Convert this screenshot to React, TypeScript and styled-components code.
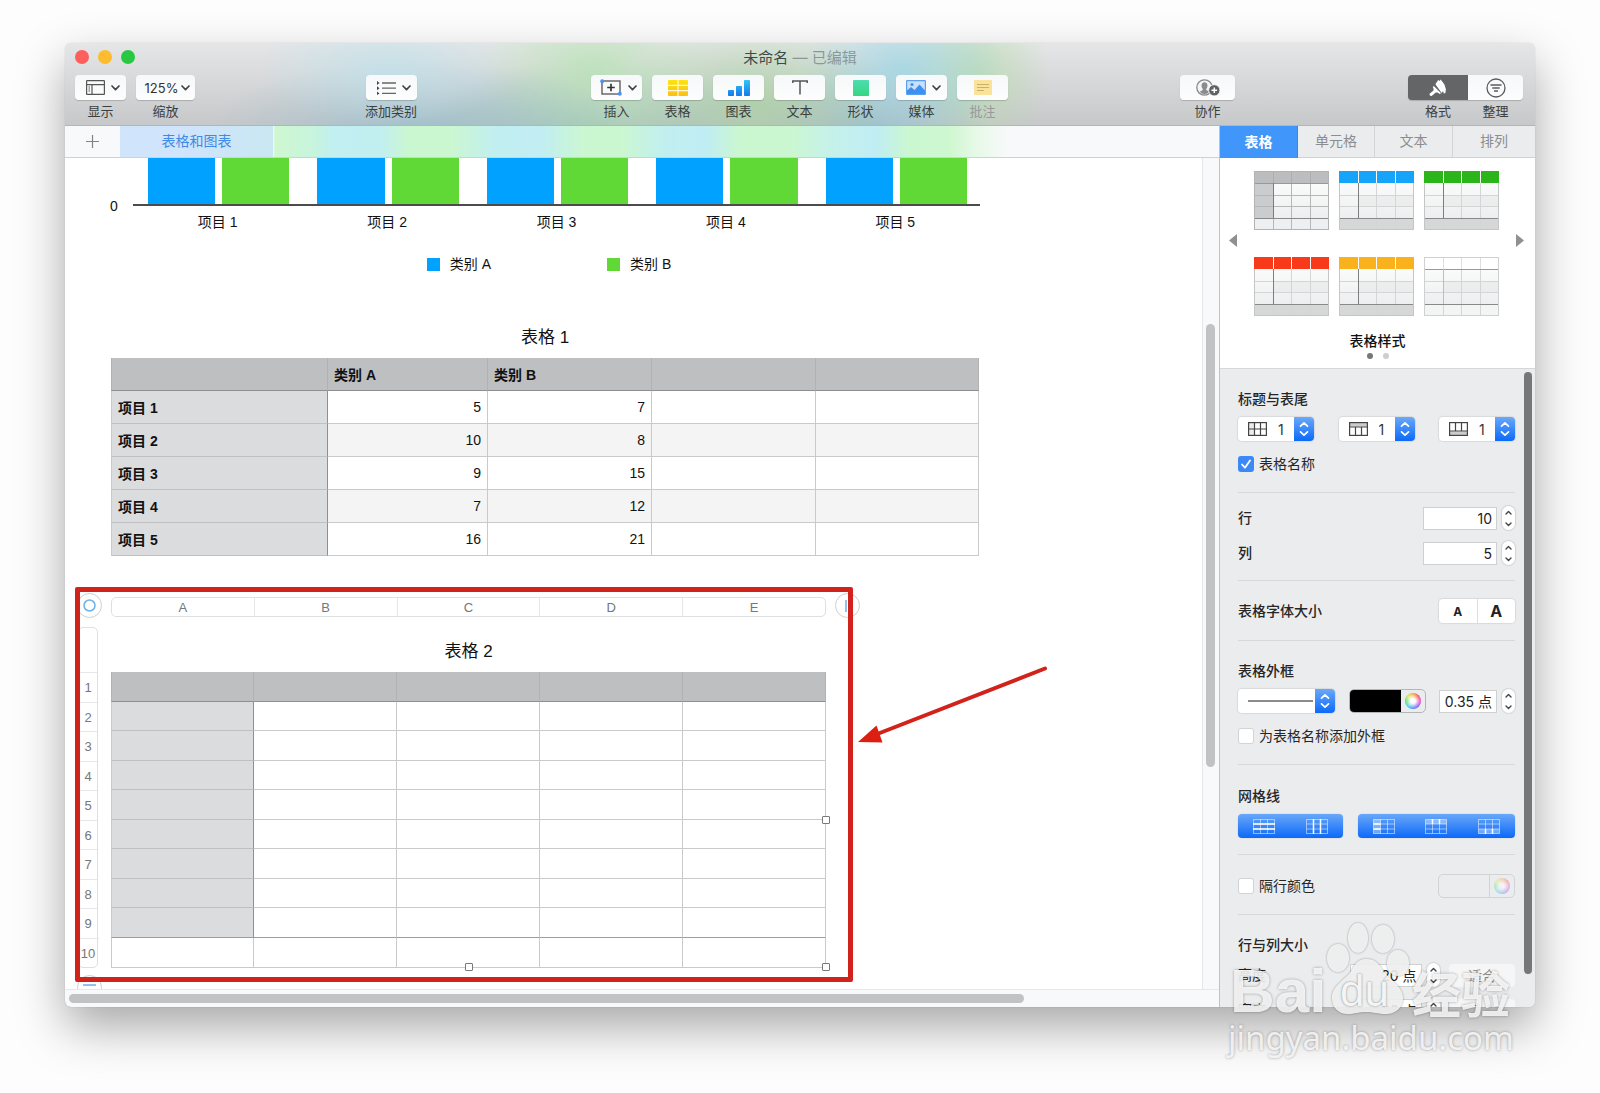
import React from "react";
import styled, { createGlobalStyle, css } from "styled-components";

const uiFont = `Inter, "Noto Sans CJK SC", sans-serif`;
const docFont = `"Liberation Sans", "Noto Sans CJK SC", sans-serif`;

const GlobalStyle = createGlobalStyle`
  *, *::before, *::after { box-sizing: border-box; }
  body { margin: 0; background: #fdfdfe; font-family: ${uiFont}; color: #262626; }
  button, input, select { font-family: inherit; margin: 0; padding: 0; border: 0; background: none; color: inherit; }
`;

/* ---------- window frame ---------- */

const Page = styled.div`
  position: relative;
  min-height: 100vh;
  display: flex;
  padding: 43px 65px 86px;
  overflow: hidden;
`;

const Window = styled.main`
  flex: 1;
  min-width: 0;
  display: flex;
  flex-direction: column;
  border-radius: 6px;
  overflow: hidden;
  background: #f8f9fb;
  box-shadow: 0 0 1px rgba(0, 0, 0, 0.3), 0 20px 48px rgba(0, 0, 0, 0.34);
`;

const TitleArea = styled.header`
  border-bottom: 1px solid #b3b5b6;
  background:
    radial-gradient(ellipse 9% 70% at 22% 30%, rgba(190, 226, 236, 0.7), transparent),
    radial-gradient(ellipse 14% 80% at 24% 100%, rgba(130, 185, 205, 0.5), transparent),
    radial-gradient(ellipse 8% 100% at 36% 30%, rgba(180, 228, 176, 0.7), transparent),
    radial-gradient(ellipse 12% 80% at 36% 100%, rgba(140, 200, 170, 0.5), transparent),
    radial-gradient(ellipse 9% 100% at 47% 70%, rgba(150, 208, 140, 0.55), transparent),
    radial-gradient(ellipse 7% 90% at 57% 30%, rgba(150, 214, 228, 0.7), transparent),
    radial-gradient(ellipse 8% 80% at 55% 100%, rgba(120, 180, 200, 0.45), transparent),
    radial-gradient(ellipse 5% 100% at 62% 40%, rgba(180, 220, 168, 0.7), transparent),
    linear-gradient(#e5e6e7, #c7c8ca);
`;

const TitleBar = styled.div`
  display: grid;
  grid-template-columns: 1fr auto 1fr;
  align-items: center;
  height: 32px;
  padding: 0 10px;
`;

const Lights = styled.div`
  display: flex;
  gap: 9px;
  padding-bottom: 4px;
`;

const Light = styled.button<{ $color: string }>`
  width: 14px;
  height: 14px;
  border-radius: 50%;
  background: ${(p) => p.$color};
`;

const DocTitle = styled.h1`
  margin: 0;
  padding-bottom: 2px;
  font-size: 15px;
  font-weight: 400;
  line-height: 28px;
  color: #3f4a47;
  span { color: #8b989a; }
`;

const Toolbar = styled.div`
  display: flex;
  padding: 0 12px 0 10px;
  height: 50px;
`;

const Spacer = styled.div<{ $grow: number }>`
  flex: ${(p) => p.$grow} 1 0;
`;

const ToolGroup = styled.div<{ $joined?: boolean }>`
  display: flex;
  gap: ${(p) => (p.$joined ? 0 : 10)}px;
`;

const ToolItem = styled.div<{ $faded?: boolean }>`
  display: flex;
  flex-direction: column;
  align-items: center;
  color: ${(p) => (p.$faded ? "#97999a" : "#3c3f40")};
`;

const ToolButton = styled.button<{ $width: number; $edge?: "left" | "right"; $menu?: boolean; $gap: number }>`
  display: flex;
  align-items: center;
  justify-content: center;
  gap: ${(p) => p.$gap}px;
  width: ${(p) => p.$width}px;
  height: 25px;
  padding-left: ${(p) => (p.$menu ? 4 : 0)}px;
  border-radius: 4px;
  background: linear-gradient(#f6f8f9, #fdfdfd);
  box-shadow: 0 1px 1px rgba(0, 0, 0, 0.18);
  font-size: 13px;
  color: #333;
  ${(p) => p.$edge === "left" && css`border-radius: 4px 0 0 4px; background: #646566; color: #fff;`}
  ${(p) => p.$edge === "right" && css`border-radius: 0 4px 4px 0;`}
`;

const ToolCaption = styled.span`
  margin-top: 1px;
  font-size: 13px;
  line-height: 20px;
  white-space: nowrap;
`;

const Body = styled.div`
  flex: 1;
  display: flex;
  min-height: 0;
`;

const Main = styled.div`
  flex: 1;
  min-width: 0;
  display: flex;
  flex-direction: column;
`;

/* ---------- sheet tabs ---------- */

const SheetTabs = styled.nav`
  display: flex;
  height: 32px;
  border-bottom: 1px solid #cdd3d3;
  background: linear-gradient(
    90deg,
    #f8f9fb 208px, #cff7d0 210px, #c6f4de 250px, #c1eff2 270px, #c1eff0 315px, #cbf7d0 345px, #cbf7d0 385px,
    #c1eff0 430px, #c1edf4 475px, #cbf7d0 520px, #cbf7d0 555px, #c1eff0 600px, #bfedf4 640px,
    #cbf7d0 675px, #cbf7d0 725px, #c6f1ea 765px, #bfedf4 810px, #cbf7d0 845px, #cef7d0 885px,
    #e6f9e6 910px, #f8f9fb 942px
  );
`;

const AddSheet = styled.button`
  width: 55px;
  display: flex;
  align-items: center;
  justify-content: center;
`;

const SheetTab = styled.button`
  width: 153px;
  padding-bottom: 3px;
  font-size: 14px;
  color: #3f8ae6;
  background: linear-gradient(90deg, #d0e4fc 40%, #c9e7f1);
`;

/* ---------- canvas ---------- */

const CanvasRow = styled.div`
  flex: 1;
  display: flex;
`;

const Sheet = styled.section`
  position: relative;
  flex: 1;
  min-width: 0;
  overflow: hidden;
  padding-bottom: 21px;
  background: #fff;
  font-family: ${docFont};
  color: #111;
`;

const VerticalTrack = styled.div`
  display: grid;
  grid-template-rows: 166fr 443fr 222fr;
  width: 17px;
  padding: 0 4px 0 3px;
  border-left: 1px solid #e6e7e9;
`;

const HorizontalTrack = styled.div`
  display: grid;
  grid-template-columns: 4fr 955fr 195fr;
  height: 18px;
  padding: 4px 0;
  border-top: 1px solid #e6e8ea;
`;

const Thumb = styled.div<{ $dark?: boolean }>`
  border-radius: 5px;
  background: ${(p) => (p.$dark ? "#767779" : "#c1c2c4")};
`;

const VThumb = styled(Thumb)`
  grid-row: 2;
`;

const HThumb = styled(Thumb)`
  grid-column: 2;
`;

const Chart = styled.figure`
  display: grid;
  grid-template-columns: 13px 847px;
  column-gap: 10px;
  margin: 0 0 0 45px;
`;

const AxisZero = styled.span`
  align-self: end;
  font-size: 14px;
  line-height: 16px;
  height: 8px;
`;

const Plot = styled.div`
  display: flex;
  height: 48px;
  border-bottom: 2px solid #4c4c4c;
`;

const BarPair = styled.div`
  flex: 1;
  display: flex;
  gap: 7px;
  padding: 0 13px 0 15px;
`;

const Bar = styled.div<{ $color: string }>`
  flex: 1;
  background: ${(p) => p.$color};
`;

const AxisLabels = styled.div`
  grid-column: 2;
  display: flex;
  font-size: 14px;
  line-height: 32px;
  text-align: center;
  span { flex: 1; }
`;

const Legend = styled.figcaption`
  grid-column: 2;
  display: flex;
  justify-content: center;
  gap: 116px;
  margin: 16px 15px 52px 0;
  font-size: 14px;
  line-height: 20px;
`;

const LegendEntry = styled.span`
  display: flex;
  align-items: center;
  gap: 10px;
`;

const Swatch = styled.i<{ $color: string }>`
  width: 13px;
  height: 13px;
  background: ${(p) => p.$color};
`;

const DataTable = styled.table<{ $width: number }>`
  width: ${(p) => p.$width}px;
  table-layout: fixed;
  border-spacing: 0;
  font-size: 14px;
  line-height: 20px;
  caption { font-size: 17px; line-height: 24px; }
  th, td { padding: 0 6px; border: 0 solid #c9cacb; border-width: 0 1px 1px 0; }
  th { padding-top: 2px; text-align: left; font-weight: 700; }
  td { text-align: right; }
  tr > :first-child { border-left-width: 1px; }
  thead th { background: #bdbfc1; border-color: #b0b2b4; border-bottom-color: #8d8f91; }
  tbody th { background: #dbdcde; border-right-color: #8d8f91; border-bottom-color: #bfc0c2; }
`;

const FirstTable = styled(DataTable)`
  margin: 0 0 41px 46px;
  caption { padding-bottom: 8px; }
  tr { height: 33px; }
  tbody tr:nth-child(even) td { background: #f4f4f5; }
`;

const SecondTable = styled(DataTable)`
  align-self: start;
  caption { padding: 13px 0 8px; }
  thead tr, tfoot tr { height: 30px; }
  tbody tr:nth-child(odd) { height: 29px; }
  tbody tr:nth-child(even) { height: 30px; }
  tbody tr:last-child > * { border-bottom-color: #9c9d9f; }
`;

const Selected = styled.div`
  position: relative;
  display: grid;
  grid-template-columns: 20px 715px;
  gap: 10px 13px;
  margin-left: 13px;
  width: 748px;
`;

const ColumnBar = styled.div`
  grid-column: 2;
  display: flex;
  height: 20px;
  border: 1px solid #dedfe0;
  border-radius: 5px;
  font-size: 13px;
  line-height: 19px;
  text-align: center;
  color: #757779;
  span { flex: 1; }
  span + span { border-left: 1px solid #e6e7e8; }
`;

const RowBar = styled.div`
  display: flex;
  flex-direction: column;
  border: 1px solid #dedfe0;
  border-radius: 5px;
  font-size: 13px;
  text-align: center;
  color: #757779;
  &::before { content: ""; flex: 0 0 44px; }
  span {
    flex: 0 0 29px;
    padding-top: 1px;
    line-height: 27px;
    border-top: 1px solid #e6e7e8;
  }
  span:nth-child(odd) { flex-basis: 30px; }
  span:last-child { margin: 0 -2px; }
`;

const RoundHandle = styled.button<{ $left: number; $top: number }>`
  position: absolute;
  left: ${(p) => p.$left}px;
  top: ${(p) => p.$top}px;
  display: flex;
  align-items: center;
  justify-content: center;
  width: 25px;
  height: 25px;
  border: 1px solid #cfcfd1;
  border-radius: 50%;
  background: #fff;
`;

const SizeHandle = styled.i<{ $left: number; $top: number }>`
  position: absolute;
  left: ${(p) => p.$left}px;
  top: ${(p) => p.$top}px;
  width: 8px;
  height: 8px;
  border: 1px solid #77787a;
  border-radius: 1px;
  background: #fff;
`;

const Highlight = styled.div`
  position: absolute;
  left: 10px;
  top: 429px;
  width: 778px;
  height: 395px;
  border: 5px solid #d1231b;
  border-radius: 2px;
  pointer-events: none;
`;

const Arrow = styled.svg`
  position: absolute;
  left: 793px;
  top: 506px;
`;

/* ---------- inspector ---------- */

const Inspector = styled.aside`
  display: flex;
  flex-direction: column;
  width: 316px;
  border-left: 1px solid #c0c2c4;
  background: #ebecee;
`;

const InspectorTabs = styled.div`
  display: grid;
  grid-template-columns: 78px 77px 78px 1fr;
  height: 32px;
  border-bottom: 1px solid #cfd1d3;
`;

const InspectorTab = styled.button<{ $active?: boolean }>`
  padding-bottom: 3px;
  font-size: 14px;
  color: #8b8d8f;
  border-right: 1px solid #d2d4d6;
  &:last-child { border-right: 0; }
  ${(p) => p.$active && css`
    margin-bottom: -1px;
    font-weight: 700;
    color: #fff;
    background: #4096fa;
    border-right-color: #3a86df;
  `}
`;

const StylesArea = styled.section`
  display: flex;
  flex-direction: column;
  align-items: center;
  height: 211px;
  padding-top: 13px;
  border-bottom: 1px solid #d6d7d9;
  background: #fff;
`;

const StylesRow = styled.div`
  display: flex;
  align-items: center;
  justify-content: space-between;
  width: 100%;
  padding: 0 11px 0 9px;
`;

const PageArrow = styled.button`
  display: flex;
  width: 8px;
  padding-bottom: 6px;
`;

const StyleGrid = styled.div`
  display: grid;
  grid-template-columns: repeat(3, 75px);
  gap: 27px 10px;
`;

const StyleThumb = styled.button`
  display: block;
  height: 59px;
`;

const StylesTitle = styled.h2`
  margin: 14px 0 1px;
  font-size: 14px;
  font-weight: 500;
  line-height: 22px;
  color: #111;
`;

const Dots = styled.div`
  display: flex;
  gap: 10px;
`;

const Dot = styled.i<{ $on?: boolean }>`
  width: 6px;
  height: 6px;
  border-radius: 50%;
  background: ${(p) => (p.$on ? "#76777a" : "#cdced0")};
`;

const InspectorBody = styled.div`
  flex: 1 1 0;
  display: flex;
  min-height: 0;
  overflow: hidden;
`;

const Sections = styled.div`
  flex: 1;
  padding-left: 18px;
`;

const InspectorTrack = styled.div`
  display: grid;
  grid-template-rows: 3fr 602fr 33fr;
  width: 20px;
  padding: 0 3px 0 9px;
`;

const Section = styled.section<{ $top: number; $bottom: number }>`
  padding: ${(p) => p.$top}px 0 ${(p) => p.$bottom}px;
  border-bottom: 1px solid #d6d8da;
`;

const SectionTitle = styled.h2`
  margin: 0;
  font-size: 14px;
  font-weight: 500;
  line-height: 20px;
`;

const Row = styled.div<{ $gap?: number }>`
  display: flex;
  align-items: center;
  justify-content: space-between;
  margin-top: ${(p) => p.$gap ?? 0}px;
  font-size: 14px;
`;

const RowLabel = styled.label`
  font-weight: 500;
  line-height: 24px;
`;

const CheckRow = styled.label<{ $gap?: number }>`
  display: flex;
  align-items: center;
  gap: 5px;
  margin-top: ${(p) => p.$gap ?? 0}px;
  font-size: 14px;
  line-height: 20px;
`;

const CheckBox = styled.input`
  appearance: none;
  width: 16px;
  height: 16px;
  border-radius: 3px;
  background: #fff;
  box-shadow: inset 0 0 0 1px #d2d3d5;
  &:checked {
    box-shadow: none;
    background: #3b89f7 url("data:image/svg+xml,%3Csvg xmlns='http://www.w3.org/2000/svg' viewBox='0 0 16 16'%3E%3Cpath d='M4 8.5l3 3.2L12 4.5' fill='none' stroke='white' stroke-width='1.8' stroke-linecap='round' stroke-linejoin='round'/%3E%3C/svg%3E");
  }
`;

const SelectBox = styled.div<{ $width: number }>`
  display: flex;
  align-items: center;
  width: ${(p) => p.$width}px;
  height: 24px;
  padding-left: 10px;
  border-radius: 4px;
  overflow: hidden;
  background: #fff;
  box-shadow: 0 0 1px 1px rgba(0, 0, 0, 0.08);
`;

const Select = styled.select`
  appearance: none;
  flex: 1;
  min-width: 0;
  height: 24px;
  padding-left: 11px;
  font-size: 14px;
  color: #333;
`;

const LineSelect = styled(Select)`
  margin-right: 2px;
  background: linear-gradient(#8a8b8d, #8a8b8d) center / 100% 2px no-repeat;
`;

const SelectCap = styled.span`
  display: flex;
  align-items: center;
  justify-content: center;
  width: 20px;
  height: 24px;
  background: linear-gradient(#6aa8fa, #0b6af8);
`;

const FieldGroup = styled.div`
  display: flex;
  align-items: center;
  gap: 5px;
`;

const Field = styled.input<{ $width: number }>`
  width: ${(p) => p.$width}px;
  height: 23px;
  padding: 0 4px;
  border: 1px solid #cfd0d2;
  background: #fff;
  font-size: 14px;
  line-height: 20px;
  text-align: right;
  color: #222;
`;

const Stepper = styled.div`
  display: flex;
  flex-direction: column;
  width: 13px;
  height: 24px;
  border-radius: 7px;
  background: #fff;
  box-shadow: 0 0 1px 1px rgba(0, 0, 0, 0.1);
  button { flex: 1; display: flex; align-items: center; justify-content: center; }
`;

const Segments = styled.div<{ $blue?: boolean; $width: number }>`
  display: flex;
  width: ${(p) => p.$width}px;
  height: 24px;
  border-radius: 4px;
  background: ${(p) => (p.$blue ? "linear-gradient(#69a7fa, #0c69f8)" : "#fff")};
  box-shadow: 0 0 1px 1px rgba(0, 0, 0, ${(p) => (p.$blue ? 0.04 : 0.08)});
  button { flex: 1; display: flex; align-items: center; justify-content: center; font-weight: 700; color: #222; }
  button + button { border-left: ${(p) => (p.$blue ? 0 : 1)}px solid #dcdddf; }
`;

const Letter = styled.span<{ $size: number }>`
  font-size: ${(p) => p.$size}px;
`;

const ColorWell = styled.div<{ $off?: boolean }>`
  display: grid;
  grid-template-columns: 1fr 24px;
  width: 77px;
  height: 24px;
  border: 1px solid ${(p) => (p.$off ? "#d2d3d5" : "#b5b6b8")};
  border-radius: 5px;
  overflow: hidden;
`;

const ColorChip = styled.button<{ $off?: boolean }>`
  background: ${(p) => (p.$off ? "transparent" : "#000")};
  border-right: 1px solid ${(p) => (p.$off ? "#d2d3d5" : "#000")};
`;

const WheelButton = styled.button<{ $off?: boolean }>`
  display: flex;
  align-items: center;
  justify-content: center;
  opacity: ${(p) => (p.$off ? 0.4 : 1)};
`;

const Wheel = styled.i`
  width: 16px;
  height: 16px;
  border-radius: 50%;
  background:
    radial-gradient(circle, #fff 20%, rgba(255, 255, 255, 0) 70%),
    conic-gradient(#f6a63b, #f2514d, #e84bd0, #8a56f0, #4a8cf5, #3fd0e8, #55dc6a, #d5e84a, #f6a63b);
`;

const FitButton = styled.button`
  width: 66px;
  height: 23px;
  border-radius: 4px;
  background: #f6f6f7;
  font-size: 14px;
  color: #8f9092;
`;

const SizeLabel = styled.label`
  width: 102px;
  line-height: 24px;
`;

/* ---------- watermark ---------- */

const Watermark = styled.div`
  position: absolute;
  right: 84px;
  bottom: 39px;
  width: 288px;
  color: rgba(252, 252, 252, 0.86);
  text-shadow: 0 0 3px rgba(0, 0, 0, 0.36);
  pointer-events: none;
`;

const MarkTop = styled.div`
  display: flex;
  align-items: flex-end;
  height: 113px;
  font-weight: 700;
  line-height: 62px;
`;

const MarkLatin = styled.span`
  width: 98px;
  padding-left: 2px;
  font-family: "Liberation Sans", sans-serif;
  font-size: 62px;
`;

const MarkPaw = styled.span`
  position: relative;
  width: 82px;
  height: 113px;
  svg { display: block; overflow: visible; filter: drop-shadow(0 0 1px rgba(0, 0, 0, 0.4)); }
`;

const PawText = styled.span`
  position: absolute;
  left: 14px;
  bottom: 0;
  font-family: "Liberation Sans", sans-serif;
  font-size: 44px;
  font-weight: 400;
  color: #f4f4f5;
  text-shadow: 0 0 2px rgba(0, 0, 0, 0.5);
`;

const MarkCjk = styled.span`
  padding-left: 4px;
  font-family: "Noto Sans CJK SC", sans-serif;
  font-size: 49px;
  line-height: 60px;
`;

const MarkUrl = styled.div`
  font-family: "Noto Sans", sans-serif;
  font-size: 33px;
  line-height: 32px;
`;

/* ---------- icons ---------- */

const Chevron = () => (
  <svg width="9" height="6" viewBox="0 0 9 6" fill="none" stroke="#444" strokeWidth="1.7" strokeLinecap="round" strokeLinejoin="round">
    <path d="M1 1l3.5 3.6L8 1" />
  </svg>
);

const UpDown = () => (
  <svg width="10" height="16" viewBox="0 0 10 16" fill="none" stroke="#fff" strokeWidth="1.7" strokeLinecap="round" strokeLinejoin="round">
    <path d="M1.5 5.2L5 1.8l3.5 3.4M1.5 10.8L5 14.2l3.5-3.4" />
  </svg>
);

const Tick = ({ down }: { down?: boolean }) => (
  <svg width="7" height="5" viewBox="0 0 7 5" fill="none" stroke="#444" strokeWidth="1.4" strokeLinecap="round" strokeLinejoin="round">
    <path d={down ? "M1 1l2.5 2.5L6 1" : "M1 4l2.5-2.5L6 4"} />
  </svg>
);

const ViewIcon = () => (
  <svg width="19" height="15" viewBox="0 0 19 15" fill="none" stroke="#555" strokeWidth="1.2">
    <rect x="0.6" y="0.6" width="17.8" height="13.8" rx="0.5" />
    <path d="M0.6 4.6h17.8M6 4.6v9.8M2.5 7h1.5M2.5 9h1.5M2.5 11h1.5" />
  </svg>
);

const CategoryIcon = () => (
  <svg width="20" height="14" viewBox="0 0 20 14" fill="none" stroke="#666" strokeWidth="1.3">
    <path d="M6 2h14M6 7.2h14M6 12.4h14" />
    <path d="M1 0l2.5 2L1 4zM1 5.2l2.5 2L1 9.2zM1 10.4l2.5 2L1 14z" fill="#444" stroke="none" />
  </svg>
);

const InsertIcon = () => (
  <svg width="22" height="17" viewBox="0 0 22 17" fill="none">
    <rect x="2" y="2" width="18" height="13" stroke="#555" strokeWidth="1.3" />
    <path d="M11 4.7v7.6M7.2 8.5h7.6" stroke="#333" strokeWidth="1.7" />
    <circle cx="2.2" cy="2.2" r="2" fill="#4a93f0" />
    <circle cx="19.8" cy="14.8" r="2" fill="#4a93f0" />
  </svg>
);

const GridIcon = () => (
  <svg width="20" height="16" viewBox="0 0 20 16">
    <defs>
      <linearGradient id="gridFill" x1="0" x2="0" y1="0" y2="1"><stop stopColor="#fbe40d" /><stop offset="1" stopColor="#fcbf17" /></linearGradient>
    </defs>
    <rect width="20" height="16" rx="1" fill="url(#gridFill)" />
    <path d="M10 0v16M0 5.3h20M0 10.7h20" stroke="#fff9d8" strokeWidth="1.2" />
  </svg>
);

const ChartIcon = () => (
  <svg width="22" height="16" viewBox="0 0 22 16">
    <defs>
      <linearGradient id="chartFill" x1="0" x2="0" y1="0" y2="16" gradientUnits="userSpaceOnUse"><stop stopColor="#2fc6f6" /><stop offset="1" stopColor="#1879ee" /></linearGradient>
    </defs>
    <g fill="url(#chartFill)"><rect y="10" width="6" height="6" rx="0.8" /><rect x="8" y="6" width="6" height="10" rx="0.8" /><rect x="16" width="6" height="16" rx="0.8" /></g>
  </svg>
);

const TextIcon = () => (
  <svg width="16" height="15" viewBox="0 0 16 15" fill="none" stroke="#555" strokeWidth="1.5"><path d="M0.8 3V0.9h14.4V3M8 0.9V14.5" /></svg>
);

const ShapeIcon = () => (
  <svg width="16" height="16" viewBox="0 0 16 16">
    <defs><linearGradient id="shapeFill" x1="0" x2="0" y1="0" y2="1"><stop stopColor="#4fdcb0" /><stop offset="1" stopColor="#35d683" /></linearGradient></defs>
    <rect width="16" height="16" rx="0.8" fill="url(#shapeFill)" />
  </svg>
);

const MediaIcon = () => (
  <svg width="20" height="15" viewBox="0 0 20 15">
    <rect x="0.6" y="0.6" width="18.8" height="13.8" rx="0.6" fill="#c8e0fb" stroke="#5aa0f2" strokeWidth="1.2" />
    <path d="M1 10.5l4-3.5 3.500 3 5-5.500L19 10.500V14H1z" fill="#3d8ff2" />
    <circle cx="6" cy="4.5" r="1.6" fill="#3d8ff2" />
  </svg>
);

const NoteIcon = () => (
  <svg width="18" height="15" viewBox="0 0 18 15">
    <rect width="18" height="15" rx="0.8" fill="#fbe29a" />
    <path d="M3 4.5h12M3 7.5h12M3 10.5h7" stroke="#cbb067" strokeWidth="1.2" />
  </svg>
);

const PeopleIcon = () => (
  <svg width="24" height="17" viewBox="0 0 24 17">
    <circle cx="8.5" cy="8.5" r="7.7" fill="#f4f5f6" stroke="#88898b" strokeWidth="1.3" />
    <path d="M8.5 3.3c2 0 3 1.500 3 3.200 0 1.600-.6 2.500-1.200 3.300v1.300l3 1.700A7 7 0 0 1 8.500 15.300a7 7 0 0 1-4.800-2.500l3-1.700V9.800C6.100 9 5.500 8.100 5.500 6.500c0-1.700 1-3.200 3-3.200z" fill="#8b8c8e" />
    <circle cx="18.3" cy="11.3" r="5.6" fill="#606163" stroke="#f8f8f8" strokeWidth="0.8" />
    <path d="M18.3 8.5v5.6M15.5 11.3h5.6" stroke="#fff" strokeWidth="1.5" />
  </svg>
);

const BrushIcon = () => (
  <svg width="18" height="17" viewBox="0 0 18 17" fill="#fff">
    <path d="M6.4 5.2L9.2.9l1.500 1 .9-1.400 1.600 2 2.200 2.900 1.500 4.800-.5 3.800-1.700.4-.6-2.400-1.500 1.900-1-1.400z" />
    <path d="M4.8 6.9l7.2 7.4-1.200.6-2.300-1.300-1.700-.1-3.900 3.200c-1.600.7-2.900-.7-2.100-2.200l3.700-2.900.1-1.700-.8-1.900z" />
  </svg>
);

const OrganizeIcon = () => (
  <svg width="20" height="20" viewBox="0 0 20 20" fill="none" stroke="#5b5c5e" strokeWidth="1.3">
    <circle cx="10" cy="10" r="9" />
    <path d="M4.5 7h11M6.3 10h7.4M8 13h4" strokeWidth="1.5" />
  </svg>
);

const TableGlyph = ({ kind }: { kind: "column" | "header" | "footer" }) => (
  <svg width="19" height="14" viewBox="0 0 19 14" fill="none" stroke="#444" strokeWidth="1.2">
    {kind === "column" && <rect x="0.6" y="0.6" width="6" height="12.8" fill="#ececec" stroke="none" />}
    {kind === "header" && <rect x="0.6" y="0.6" width="17.8" height="4" fill="#ccc" stroke="none" />}
    {kind === "footer" && <rect x="0.6" y="9.4" width="17.8" height="4" fill="#ccc" stroke="none" />}
    <rect x="0.6" y="0.6" width="17.8" height="12.8" />
    {kind === "column" && <path d="M6.5 0.6v12.8M12.5 0.6v12.8M0.6 7h17.8" />}
    {kind === "header" && <path d="M0.6 5h17.8M6.5 5v8.4M12.5 5v8.4" />}
    {kind === "footer" && <path d="M0.6 9h17.8M6.5 0.6v8.4M12.5 0.6v8.4" />}
  </svg>
);

type LineKind = "rows" | "columns" | "headCol" | "headRow" | "foot";

const GridLineIcon = ({ kind }: { kind: LineKind }) => (
  <svg width="22" height="15" viewBox="0 0 22 15" fill="none" stroke="#fff">
    <g strokeOpacity="0.5" strokeWidth="1">
      <rect x="0.5" y="0.5" width="21" height="14" />
      <path d="M7.5 0.5v14M14.5 0.5v14M0.5 5h21M0.5 10h21" />
    </g>
    {kind === "rows" && <path d="M0 5h22M0 10h22" strokeWidth="1.5" />}
    {kind === "columns" && <path d="M7.5 0v15M14.5 0v15" strokeWidth="1.5" />}
    {kind === "headCol" && <><rect x="0.5" y="0.5" width="7" height="14" fill="#fff" fillOpacity="0.35" stroke="none" /><path d="M0.5 5h7M0.5 10h7" strokeWidth="1.5" /></>}
    {kind === "headRow" && <><rect x="0.5" y="0.5" width="21" height="4.5" fill="#fff" fillOpacity="0.35" stroke="none" /><path d="M7.5 0v5M14.5 0v5" strokeWidth="1.5" /></>}
    {kind === "foot" && <><rect x="0.5" y="10" width="21" height="4.5" fill="#fff" fillOpacity="0.35" stroke="none" /><path d="M7.5 10v5M14.5 10v5" strokeWidth="1.5" /></>}
  </svg>
);

const stylePresets = [
  { name: "灰色", head: "#bcbdbf", column: "#cbccce", foot: "#eeeff0" },
  { name: "蓝色", head: "#16a3fa", column: "none", foot: "#d6d7d7" },
  { name: "绿色", head: "#2cb51b", column: "none", foot: "#d6d7d7" },
  { name: "红色", head: "#f93a1a", column: "none", foot: "#d6d7d7" },
  { name: "橙色", head: "#f9b11c", column: "none", foot: "#d6d7d7" },
  { name: "白色", head: "#ffffff", column: "none", foot: "#f3f4f4" },
];

const PresetDrawing = ({ index }: { index: number }) => {
  const { head, column, foot } = stylePresets[index];
  const plain = index === 5;
  const grey = index === 0;
  return (
    <svg width="75" height="59" viewBox="0 0 75 59">
      <defs><linearGradient id={`preset${index}`} x1="0" x2="0" y1="0" y2="1"><stop stopColor="#fff" /><stop offset="1" stopColor="#e9eaeb" /></linearGradient></defs>
      <rect width="75" height="59" fill={`url(#preset${index})`} />
      {!grey && <rect y="24" x="19" width="56" height="12" fill="#e6e8e8" fillOpacity="0.6" />}
      <rect width="75" height="12" fill={head} />
      <rect y="12" width="19" height="35" fill={column} />
      <rect y="47" width="75" height="12" fill={foot} />
      <path d="M0 24.5h75M0 35.5h75M19.5 12v47M37.5 12v47M56.5 12v47" stroke={grey ? "#b6b7b9" : "#d4d5d6"} />
      <path d="M19.5 0v12M37.5 0v12M56.5 0v12" stroke={grey ? "#acadaf" : plain ? "#dddedf" : "#fff"} />
      <path d="M0 47.5h75" stroke="#88898b" strokeWidth="1.2" />
      {(grey || plain) && <path d="M0 12.5h75" stroke="#98999b" />}
      <path d="M19.5 12v35" stroke={plain ? "#bcbdbf" : "#7c7d7f"} />
      {(grey || plain) ? <rect x="0.5" y="0.5" width="74" height="58" fill="none" stroke={grey ? "#b2b3b5" : "#cfd0d1"} /> : <path d="M0.5 12v46.5h74V12" fill="none" stroke="#c4c5c6" />}
    </svg>
  );
};

/* ---------- data ---------- */

const BLUE = "#00a1ff";
const GREEN = "#60d937";

const items = [
  { name: "项目 1", a: 5, b: 7 },
  { name: "项目 2", a: 10, b: 8 },
  { name: "项目 3", a: 9, b: 15 },
  { name: "项目 4", a: 7, b: 12 },
  { name: "项目 5", a: 16, b: 21 },
];

const letters = ["A", "B", "C", "D", "E"];

const insertTools = [
  { label: "插入", icon: <InsertIcon />, menu: true },
  { label: "表格", icon: <GridIcon /> },
  { label: "图表", icon: <ChartIcon /> },
  { label: "文本", icon: <TextIcon /> },
  { label: "形状", icon: <ShapeIcon /> },
  { label: "媒体", icon: <MediaIcon />, menu: true },
  { label: "批注", icon: <NoteIcon />, faded: true },
];

/* ---------- parts ---------- */

type ToolProps = {
  label: string;
  width?: number;
  gap?: number;
  icon: React.ReactNode;
  menu?: boolean;
  faded?: boolean;
  edge?: "left" | "right";
};

const Tool = ({ label, width = 51, gap = 6, icon, menu, faded, edge }: ToolProps) => (
  <ToolItem $faded={faded}>
    <ToolButton $width={width} $edge={edge} $menu={menu} $gap={gap} aria-label={label}>
      {icon}
      {menu && <Chevron />}
    </ToolButton>
    <ToolCaption>{label}</ToolCaption>
  </ToolItem>
);

const CountSelect = ({ kind, label }: { kind: "column" | "header" | "footer"; label: string }) => (
  <SelectBox $width={76}>
    <TableGlyph kind={kind} />
    <Select aria-label={label} defaultValue="1"><option>1</option></Select>
    <SelectCap><UpDown /></SelectCap>
  </SelectBox>
);

const NumberField = ({ id, value, width, label }: { id?: string; value: string; width: number; label: string }) => (
  <FieldGroup>
    <Field id={id} $width={width} defaultValue={value} aria-label={label} />
    <Stepper>
      <button aria-label={`${label} +`}><Tick /></button>
      <button aria-label={`${label} -`}><Tick down /></button>
    </Stepper>
  </FieldGroup>
);

const SheetCanvas = () => (
  <Sheet>
    <Chart>
      <AxisZero>0</AxisZero>
      <Plot>
        {items.map((item) => (
          <BarPair key={item.name}><Bar $color={BLUE} /><Bar $color={GREEN} /></BarPair>
        ))}
      </Plot>
      <AxisLabels>{items.map((item) => <span key={item.name}>{item.name}</span>)}</AxisLabels>
      <Legend>
        <LegendEntry><Swatch $color={BLUE} />类别 A</LegendEntry>
        <LegendEntry><Swatch $color={GREEN} />类别 B</LegendEntry>
      </Legend>
    </Chart>

    <FirstTable $width={868}>
      <caption>表格 1</caption>
      <colgroup><col width="217" /><col width="160" /><col width="164" /><col width="164" /><col width="163" /></colgroup>
      <thead>
        <tr><th /><th scope="col">类别 A</th><th scope="col">类别 B</th><th /><th /></tr>
      </thead>
      <tbody>
        {items.map((item) => (
          <tr key={item.name}><th scope="row">{item.name}</th><td>{item.a}</td><td>{item.b}</td><td /><td /></tr>
        ))}
      </tbody>
    </FirstTable>

    <Selected>
      <ColumnBar>{letters.map((letter) => <span key={letter}>{letter}</span>)}</ColumnBar>
      <RowBar>{Array.from({ length: 10 }, (_, i) => <span key={i}>{i + 1}</span>)}</RowBar>
      <SecondTable $width={715}>
        <caption>表格 2</caption>
        <thead><tr>{letters.map((letter) => <th key={letter} />)}</tr></thead>
        <tbody>
          {Array.from({ length: 8 }, (_, i) => (
            <tr key={i}><th /><td /><td /><td /><td /></tr>
          ))}
        </tbody>
        <tfoot><tr>{letters.map((letter) => <td key={letter} />)}</tr></tfoot>
      </SecondTable>
      <RoundHandle $left={-1} $top={-4} aria-label="选择表格">
        <svg width="13" height="13" viewBox="0 0 13 13"><circle cx="6.5" cy="6.5" r="5.5" fill="none" stroke="#6cb1e6" strokeWidth="1.5" /></svg>
      </RoundHandle>
      <RoundHandle $left={757} $top={-4} aria-label="添加列">
        <svg width="8" height="12" viewBox="0 0 8 12"><path d="M2 0v12M6 0v12" stroke="#6cb1e6" strokeWidth="1.5" /></svg>
      </RoundHandle>
      <RoundHandle $left={-1} $top={378} aria-label="添加行">
        <svg width="13" height="8" viewBox="0 0 13 8"><path d="M0 1h13M0 7h13" stroke="#6cb1e6" strokeWidth="1.5" /></svg>
      </RoundHandle>
      <SizeHandle $left={744} $top={219} />
      <SizeHandle $left={387} $top={366} />
      <SizeHandle $left={744} $top={366} />
    </Selected>

    <Highlight />
    <Arrow width="192" height="82" viewBox="0 0 192 82">
      <path d="M187 4.5L18 70.5" stroke="#d1231b" strokeWidth="4" strokeLinecap="round" />
      <path d="M0 78L18.5 61.5L24.5 78.5Z" fill="#dd1f12" />
    </Arrow>
  </Sheet>
);

const InspectorPanel = () => (
  <Inspector>
    <InspectorTabs>
      <InspectorTab $active>表格</InspectorTab>
      <InspectorTab>单元格</InspectorTab>
      <InspectorTab>文本</InspectorTab>
      <InspectorTab>排列</InspectorTab>
    </InspectorTabs>
    <StylesArea>
      <StylesRow>
        <PageArrow aria-label="上一页"><svg width="8" height="13" viewBox="0 0 8 13"><path d="M8 0v13L0 6.5z" fill="#8f9092" /></svg></PageArrow>
        <StyleGrid>
          {stylePresets.map((preset, i) => (
            <StyleThumb key={preset.name} aria-label={preset.name}><PresetDrawing index={i} /></StyleThumb>
          ))}
        </StyleGrid>
        <PageArrow aria-label="下一页"><svg width="8" height="13" viewBox="0 0 8 13"><path d="M0 0v13l8-6.5z" fill="#8f9092" /></svg></PageArrow>
      </StylesRow>
      <StylesTitle>表格样式</StylesTitle>
      <Dots><Dot $on /><Dot /></Dots>
    </StylesArea>
    <InspectorBody>
      <Sections>
        <Section $top={20} $bottom={18}>
          <SectionTitle>标题与表尾</SectionTitle>
          <Row $gap={8}>
            <CountSelect kind="column" label="标题列" />
            <CountSelect kind="header" label="标题行" />
            <CountSelect kind="footer" label="表尾行" />
          </Row>
          <CheckRow $gap={13}><CheckBox type="checkbox" defaultChecked />表格名称</CheckRow>
        </Section>
        <Section $top={13} $bottom={15}>
          <Row><RowLabel htmlFor="rows">行</RowLabel><NumberField id="rows" value="10" width={74} label="行" /></Row>
          <Row $gap={11}><RowLabel htmlFor="columns">列</RowLabel><NumberField id="columns" value="5" width={74} label="列" /></Row>
        </Section>
        <Section $top={18} $bottom={17}>
          <Row>
            <SectionTitle>表格字体大小</SectionTitle>
            <Segments $width={76}>
              <button aria-label="减小"><Letter $size={12}>A</Letter></button>
              <button aria-label="增大"><Letter $size={16}>A</Letter></button>
            </Segments>
          </Row>
        </Section>
        <Section $top={20} $bottom={18}>
          <SectionTitle>表格外框</SectionTitle>
          <Row $gap={8}>
            <SelectBox $width={97}>
              <LineSelect aria-label="线条样式"><option value="solid" aria-label="实线" /></LineSelect>
              <SelectCap><UpDown /></SelectCap>
            </SelectBox>
            <ColorWell>
              <ColorChip aria-label="外框颜色" />
              <WheelButton aria-label="色轮"><Wheel /></WheelButton>
            </ColorWell>
            <NumberField value="0.35 点" width={58} label="外框粗细" />
          </Row>
          <CheckRow $gap={13}><CheckBox type="checkbox" />为表格名称添加外框</CheckRow>
        </Section>
        <Section $top={21} $bottom={16}>
          <SectionTitle>网格线</SectionTitle>
          <Row $gap={8}>
            <Segments $blue $width={105}>
              <button aria-label="水平网格线"><GridLineIcon kind="rows" /></button>
              <button aria-label="垂直网格线"><GridLineIcon kind="columns" /></button>
            </Segments>
            <Segments $blue $width={157}>
              <button aria-label="标题列网格线"><GridLineIcon kind="headCol" /></button>
              <button aria-label="标题行网格线"><GridLineIcon kind="headRow" /></button>
              <button aria-label="表尾网格线"><GridLineIcon kind="foot" /></button>
            </Segments>
          </Row>
        </Section>
        <Section $top={19} $bottom={16}>
          <Row>
            <CheckRow><CheckBox type="checkbox" />隔行颜色</CheckRow>
            <ColorWell $off>
              <ColorChip $off aria-label="隔行颜色样本" />
              <WheelButton $off aria-label="隔行色轮"><Wheel /></WheelButton>
            </ColorWell>
          </Row>
        </Section>
        <Section $top={20} $bottom={16}>
          <SectionTitle>行与列大小</SectionTitle>
          <Row $gap={8}>
            <SizeLabel htmlFor="height">高度</SizeLabel>
            <NumberField id="height" value="20 点" width={72} label="高度" />
            <FitButton>适合</FitButton>
          </Row>
          <Row $gap={11}>
            <SizeLabel htmlFor="width">宽度</SizeLabel>
            <NumberField id="width" value="98 点" width={72} label="宽度" />
            <FitButton>适合</FitButton>
          </Row>
        </Section>
      </Sections>
      <InspectorTrack><VThumb $dark /></InspectorTrack>
    </InspectorBody>
  </Inspector>
);

export default function App() {
  return (
    <Page>
      <GlobalStyle />
      <Window>
        <TitleArea>
          <TitleBar>
            <Lights>
              <Light $color="#fc605c" aria-label="关闭" />
              <Light $color="#fdbc2e" aria-label="最小化" />
              <Light $color="#28c840" aria-label="缩放窗口" />
            </Lights>
            <DocTitle>未命名 <span>— 已编辑</span></DocTitle>
          </TitleBar>
          <Toolbar>
            <ToolGroup>
              <Tool label="显示" icon={<ViewIcon />} menu />
              <Tool label="缩放" width={59} gap={3} icon="125%" menu />
            </ToolGroup>
            <Spacer $grow={170} />
            <Tool label="添加类别" icon={<CategoryIcon />} menu />
            <Spacer $grow={174} />
            <ToolGroup>{insertTools.map((tool) => <Tool key={tool.label} {...tool} />)}</ToolGroup>
            <Spacer $grow={172} />
            <Tool label="协作" width={55} icon={<PeopleIcon />} />
            <Spacer $grow={173} />
            <ToolGroup $joined>
              <Tool label="格式" width={60} icon={<BrushIcon />} edge="left" />
              <Tool label="整理" width={55} icon={<OrganizeIcon />} edge="right" />
            </ToolGroup>
          </Toolbar>
        </TitleArea>
        <Body>
          <Main>
            <SheetTabs>
              <AddSheet aria-label="添加工作表">
                <svg width="13" height="13" viewBox="0 0 13 13" stroke="#808284" strokeWidth="1.2"><path d="M6.5 0v13M0 6.5h13" /></svg>
              </AddSheet>
              <SheetTab>表格和图表</SheetTab>
            </SheetTabs>
            <CanvasRow>
              <SheetCanvas />
              <VerticalTrack><VThumb /></VerticalTrack>
            </CanvasRow>
            <HorizontalTrack><HThumb /></HorizontalTrack>
          </Main>
          <InspectorPanel />
        </Body>
      </Window>
      <Watermark>
        <MarkTop>
          <MarkLatin>Bai</MarkLatin>
          <MarkPaw>
            <svg width="78" height="110" viewBox="0 0 78 110" fill="#fafafa" fillOpacity="0.86">
              <ellipse cx="12" cy="49" rx="11" ry="14" />
              <ellipse cx="32" cy="29" rx="10" ry="15" />
              <ellipse cx="57" cy="30" rx="11" ry="14" />
              <ellipse cx="72" cy="54" rx="11" ry="13" />
              <path d="M40 50c9 0 13 5 16 10 4 8 21 17 21 29 0 10-8 16-17 16-8 0-12-2-20-2s-12 2-18 2c-9 0-16-6-16-16 0-13 14-18 20-28 3-6 6-11 14-11z" />
            </svg>
            <PawText>du</PawText>
          </MarkPaw>
          <MarkCjk>经验</MarkCjk>
        </MarkTop>
        <MarkUrl>jingyan.baidu.com</MarkUrl>
      </Watermark>
    </Page>
  );
}
